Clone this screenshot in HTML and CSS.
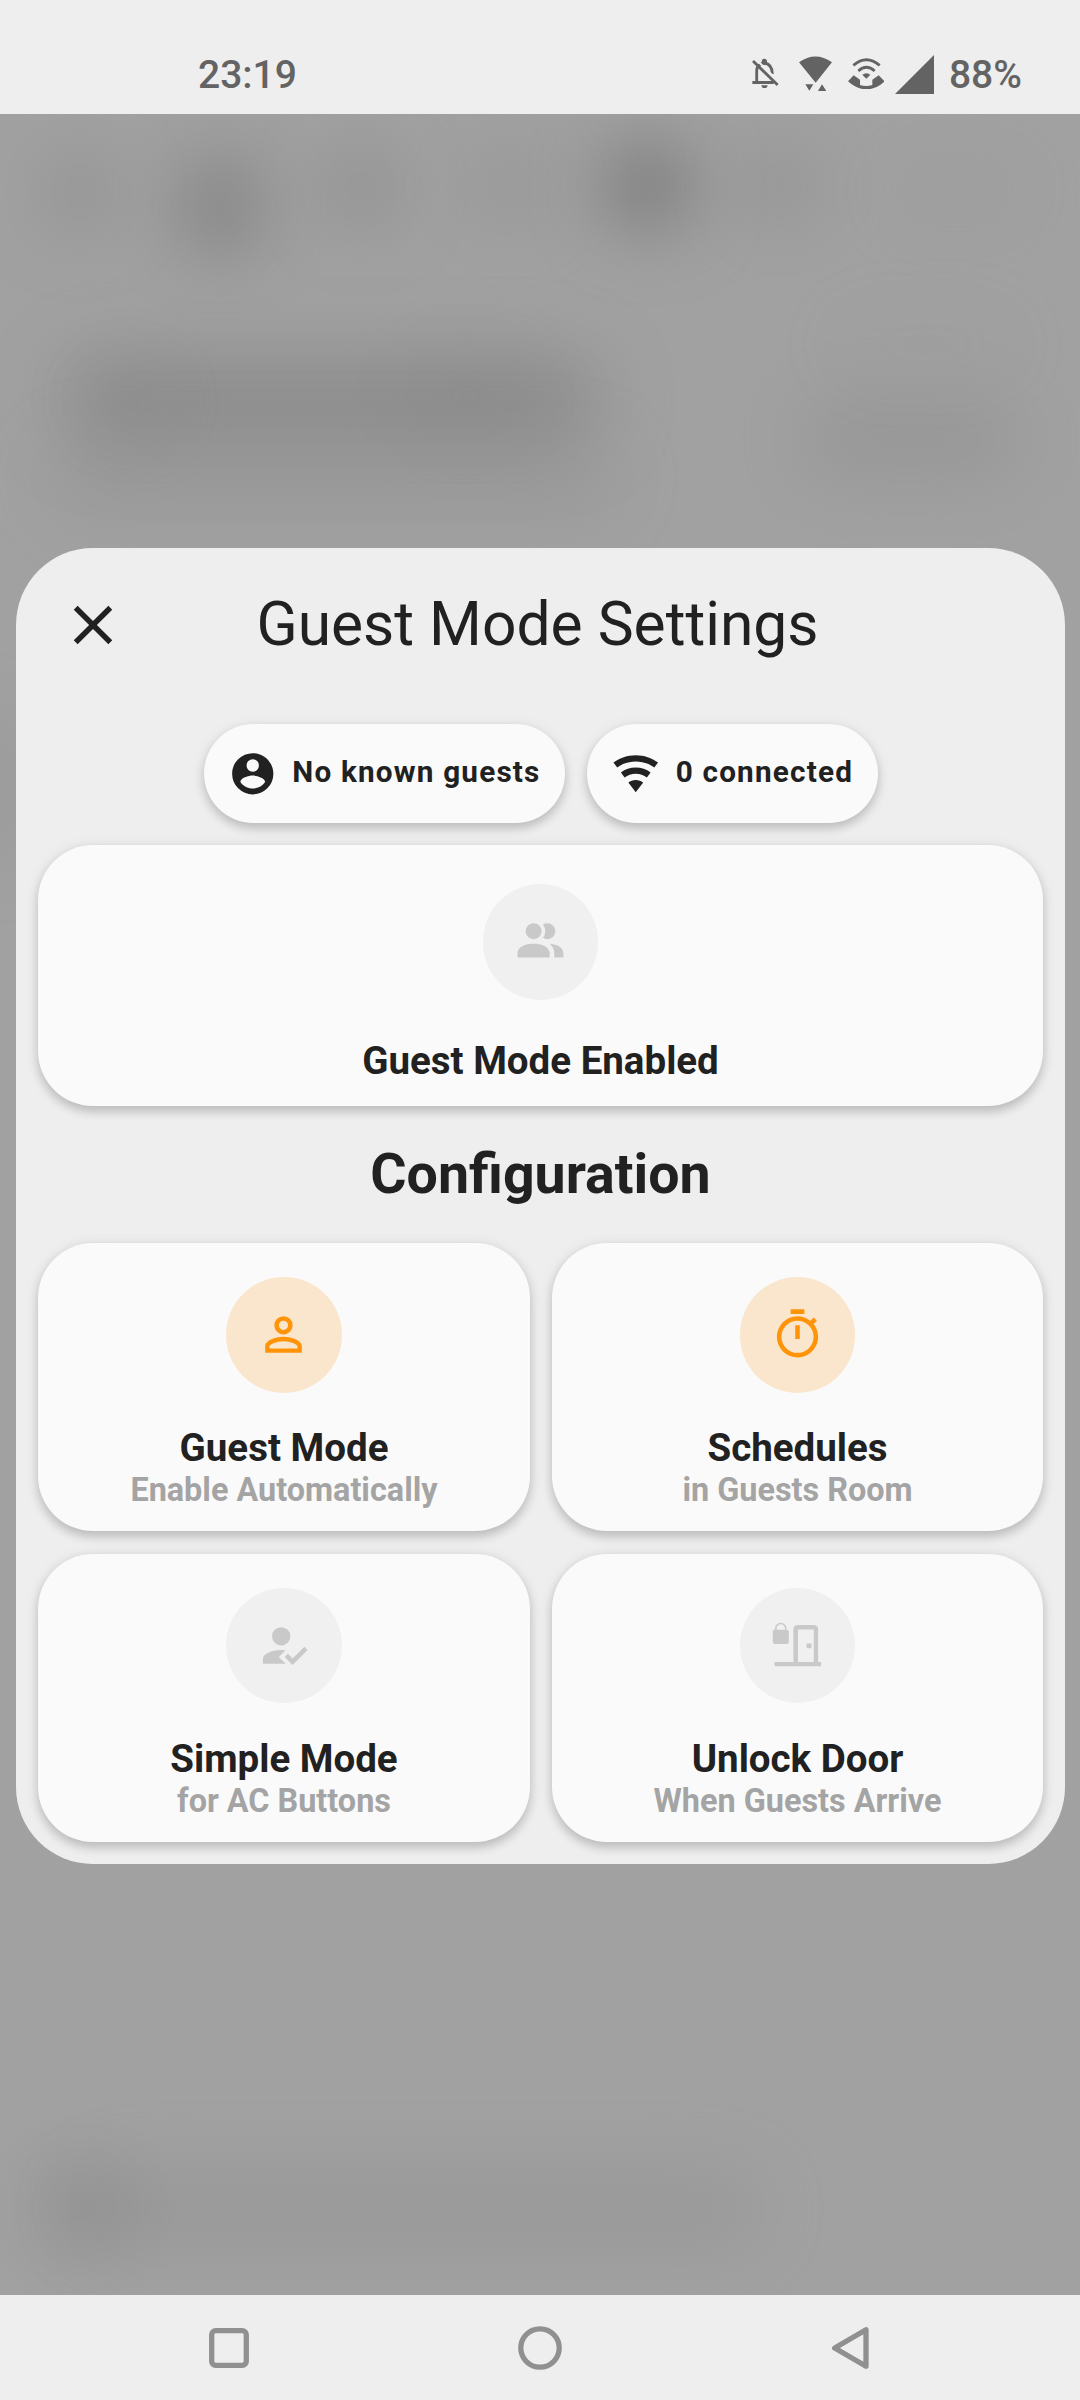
FILE: index.html
```html
<!DOCTYPE html>
<html lang="en">
<head>
<meta charset="utf-8">
<title>Guest Mode Settings</title>
<link rel="stylesheet" href="styles.css">
</head>
<body>
<div class="screen">
  <header class="statusbar">
    <span class="clock">23:19</span>
    <div class="status-icons">
      <svg class="i-bell" viewBox="97 84 80 91"><path d="M111 160V124q0-21 23-25q24 4 24 33M98 157.500H162" fill="none" stroke="#636363" stroke-width="8.500"/><path d="M126 104V94q0-8 8-8t8 8V104zM125 166h19q-1 9-9.500 9t-9.500-9z" fill="#636363"/><path d="M107 86L182 159" stroke="#eee" stroke-width="6"/><path d="M100 93L174 165" stroke="#636363" stroke-width="8.500"/></svg>
      <svg class="i-wifi" viewBox="238 77 99 106"><path d="M238 96Q287 61 337 96L288 157zM257 162H281L269 181zM295 182L307 162L320 182z" fill="#636363"/></svg>
      <svg class="i-call" viewBox="383 83 110 95"><g fill="none" stroke="#636363" stroke-width="8.500"><path d="M399 105Q438 71 478 105M414 122Q438 100 463 122"/></g><path d="M426 133Q438 124 450 133L438 145z" fill="#636363"/><path d="M383 153L400 135L419 148V164Q437 170 456 164V148L475 135L493 153Q467 177 438 177T383 153z" fill="#636363"/></svg>
      <svg class="i-signal" viewBox="0 0 39 39"><path d="M39 0V39H0z" fill="#636363"/></svg>
      <span class="battery">88%</span>
    </div>
  </header>

  <main class="backdrop">
    <div class="blobs" aria-hidden="true">
      <i class="b1"></i><i class="b2"></i><i class="b3"></i><i class="b4"></i><i class="b5"></i><i class="b6"></i><i class="b7"></i>
      <i class="b8"></i><i class="b9"></i><i class="b10"></i><i class="b11"></i><i class="b12"></i><i class="b13"></i><i class="b14"></i><i class="b15"></i><i class="b16"></i>
    </div>
    <section class="dialog">
      <div class="dialog-head">
        <svg class="close" viewBox="0 0 24 24"><path d="M19,6.41L17.59,5L12,10.59L6.41,5L5,6.41L10.59,12L5,17.59L6.41,19L12,13.41L17.59,19L19,17.59L13.41,12L19,6.41Z"/></svg>
        <h1>Guest Mode Settings</h1>
      </div>
      <div class="chips">
        <div class="chip">
          <svg viewBox="0 0 24 24"><path d="M12,19.2C9.5,19.2 7.29,17.92 6,16C6.03,14 10,12.9 12,12.9C14,12.9 17.97,14 18,16C16.71,17.92 14.5,19.2 12,19.2M12,5A3,3 0 0,1 15,8A3,3 0 0,1 12,11A3,3 0 0,1 9,8A3,3 0 0,1 12,5M12,2A10,10 0 0,0 2,12A10,10 0 0,0 12,22A10,10 0 0,0 22,12C22,6.47 17.5,2 12,2Z"/></svg>
          <span>No known guests</span>
        </div>
        <div class="chip">
          <svg viewBox="0 0 24 24"><path d="M12,21L15.6,16.2C14.6,15.45 13.35,15 12,15C10.65,15 9.4,15.45 8.4,16.2L12,21M12,3C7.95,3 4.21,4.34 1.2,6.6L3,9C5.5,7.12 8.62,6 12,6C15.38,6 18.5,7.12 21,9L22.8,6.6C19.79,4.34 16.05,3 12,3M12,9C9.3,9 6.81,9.89 4.8,11.4L6.6,13.8C8.1,12.67 9.97,12 12,12C14.03,12 15.9,12.67 17.4,13.8L19.2,11.4C17.19,9.89 14.7,9 12,9Z"/></svg>
          <span>0 connected</span>
        </div>
      </div>
      <div class="card card-wide">
        <div class="badge"><svg viewBox="0 0 24 24"><path d="M16 17V19H2V17S2 13 9 13 16 17 16 17M12.500 7.500A3.500 3.500 0 1 0 9 11A3.500 3.500 0 0 0 12.500 7.500M15.940 13A5.320 5.320 0 0 1 18 17V19H22V17S22 13.370 15.940 13M15 4A3.390 3.390 0 0 0 13.070 4.590A5 5 0 0 1 13.070 10.410A3.390 3.390 0 0 0 15 11A3.500 3.500 0 0 0 15 4Z"/></svg></div>
        <div class="name">Guest Mode Enabled</div>
      </div>
      <h2>Configuration</h2>
      <div class="grid">
        <div class="card">
          <div class="badge on"><svg viewBox="0 0 24 24"><path d="M12,4A4,4 0 0,1 16,8A4,4 0 0,1 12,12A4,4 0 0,1 8,8A4,4 0 0,1 12,4M12,6A2,2 0 0,0 10,8A2,2 0 0,0 12,10A2,2 0 0,0 14,8A2,2 0 0,0 12,6M12,13C14.67,13 20,14.33 20,17V20H4V17C4,14.33 9.33,13 12,13M12,14.9C9.03,14.9 5.9,16.36 5.9,17V18.1H18.1V17C18.1,16.36 14.97,14.9 12,14.9Z"/></svg></div>
          <div class="name">Guest Mode</div>
          <div class="sub">Enable Automatically</div>
        </div>
        <div class="card">
          <div class="badge on"><svg viewBox="0 0 24 24"><path d="M12,20A7,7 0 0,1 5,13A7,7 0 0,1 12,6A7,7 0 0,1 19,13A7,7 0 0,1 12,20M19.03,7.39L20.45,5.97C20,5.46 19.55,5 19.04,4.56L17.62,6C16.07,4.74 14.12,4 12,4A9,9 0 0,0 3,13A9,9 0 0,0 12,22C17,22 21,17.97 21,13C21,10.88 20.26,8.93 19.03,7.39M11,14H13V8H11M15,1H9V3H15V1Z"/></svg></div>
          <div class="name">Schedules</div>
          <div class="sub">in Guests Room</div>
        </div>
        <div class="card">
          <div class="badge"><svg viewBox="0 0 24 24"><path d="M21.1,12.5L22.5,13.91L15.97,20.5L12.5,17L13.9,15.59L15.97,17.67L21.1,12.5M10,17L13,20H3V18C3,15.79 6.58,14 11,14L12.89,14.11L10,17M11,4A4,4 0 0,1 15,8A4,4 0 0,1 11,12A4,4 0 0,1 7,8A4,4 0 0,1 11,4Z"/></svg></div>
          <div class="name">Simple Mode</div>
          <div class="sub">for AC Buttons</div>
        </div>
        <div class="card">
          <div class="badge"><svg viewBox="0 0 24 24"><path d="M2 19.200H10.200V5Q10.200 3 12.200 3H19Q21 3 21 5V19.200H22.300V21.100H2zM12.200 5V19.200H19.100V5zM16 11.100H18.100V13.200H16zM2 5.100H7.400Q8.200 5.100 8.200 5.900V10.500Q8.200 11.300 7.400 11.300H2Q1.200 11.300 1.200 10.500V5.900Q1.200 5.100 2 5.100z" fill-rule="evenodd"/><path d="M2.500 5.500V4.700A2.200 2.300 0 0 1 6.900 4.700V5.500" class="shackle"/></svg></div>
          <div class="name">Unlock Door</div>
          <div class="sub">When Guests Arrive</div>
        </div>
      </div>
    </section>
  </main>

  <nav class="navbar">
    <svg viewBox="0 0 44 44"><rect x="4.700" y="4.700" width="34.600" height="34.600" rx="4"/></svg>
    <svg viewBox="0 0 44 44"><circle cx="22" cy="22" r="19.200"/></svg>
    <svg viewBox="0 0 44 44"><path d="M37 3.800V40.200L5.700 22z"/></svg>
  </nav>
</div>
</body>
</html>
```
FILE: styles.css
```css
* { box-sizing: border-box; }
body { margin: 0; font-family: Roboto, "Liberation Sans", sans-serif; color: #212121; background: #eee; }
.screen { width: 1080px; height: 2400px; display: flex; flex-direction: column; }
svg { display: block; flex: none; }

.statusbar {
  height: 114px; flex: none; display: flex; justify-content: space-between; align-items: flex-start;
  padding: 51px 58px 0 198px; font-size: 39px; line-height: 49px; font-weight: 500; color: #636363;
}
.status-icons { display: flex; align-items: flex-start; }
.i-bell { width: 26.700px; height: 30.300px; margin-top: 7px; margin-right: 20.300px; }
.i-wifi { width: 33px; height: 35.300px; margin-top: 4.700px; margin-right: 15.300px; }
.i-call { width: 36.700px; height: 31.700px; margin-top: 6.700px; margin-right: 10.600px; }
.i-signal { width: 39px; height: 39px; margin-top: 3.500px; margin-right: 15px; }

.backdrop { flex: 1; position: relative; overflow: hidden; background: #a1a1a1; padding: 434px 15px 0 16px; }
.blobs { position: absolute; inset: 0; }
.blobs i { position: absolute; border-radius: 40px; filter: blur(36px); background: #808080; }
.blobs .b1 { left: 45px; top: 40px; width: 70px; height: 76px; opacity: .5; }
.blobs .b2 { left: 182px; top: 40px; width: 78px; height: 104px; opacity: .92; }
.blobs .b3 { left: 325px; top: 36px; width: 72px; height: 74px; opacity: .6; }
.blobs .b4 { left: 470px; top: 36px; width: 80px; height: 70px; opacity: .35; }
.blobs .b5 { left: 607px; top: 32px; width: 80px; height: 80px; opacity: 1; background: #727272; }
.blobs .b6 { left: 740px; top: 36px; width: 78px; height: 70px; opacity: .45; }
.blobs .b7 { left: 880px; top: 46px; width: 150px; height: 60px; opacity: .1; }
.blobs .b8 { left: 62px; top: 242px; width: 540px; height: 86px; opacity: .62; }
.blobs .b9 { left: 50px; top: 330px; width: 565px; height: 66px; opacity: .26; }
.blobs .b10 { left: 800px; top: 290px; width: 220px; height: 70px; opacity: .34; }
.blobs .b11 { left: 400px; top: 250px; width: 130px; height: 66px; opacity: .24; }
.blobs .b12 { left: 830px; top: 200px; width: 190px; height: 60px; opacity: .07; }
.blobs .b13 { left: 44px; top: 2056px; width: 74px; height: 74px; opacity: .66; }
.blobs .b14 { left: 80px; top: 2060px; width: 680px; height: 70px; opacity: .28; }
.blobs .b15 { left: -30px; top: 600px; width: 50px; height: 150px; opacity: .25; }
.blobs .b16 { left: 90px; top: 260px; width: 80px; height: 54px; opacity: .22; }

.dialog { position: relative; height: 1316px; background: #eee; border-radius: 77px; padding: 0 22px 22px; overflow: hidden; }
.dialog-head { height: 154px; display: flex; align-items: center; padding: 0 94px 0 22px; }
.close { width: 66px; height: 66px; fill: #212121; }
h1 { margin: 0; flex: 1; text-align: center; font-size: 60.500px; font-weight: 400; line-height: 72px; white-space: nowrap; }
.chips { display: flex; justify-content: center; gap: 22px; margin: 22px 0; }
.chip {
  height: 99px; display: flex; align-items: center; gap: 14.850px; padding: 0 24.400px; border-radius: 49.500px;
  background: #fafafa; font-size: 29.700px; font-weight: 700; letter-spacing: 1.200px; white-space: nowrap;
  box-shadow: 0 5.500px 10px rgba(0,0,0,.14), 0 2.750px 13.750px rgba(0,0,0,.1);
}
.chip svg { width: 49.500px; height: 49.500px; fill: #212121; }
.chip span { line-height: 36px; margin-top: -3px; }
.card {
  height: 288px; padding-top: 34px; border-radius: 55px; background: #fafafa; text-align: center;
  display: flex; flex-direction: column; align-items: center;
  box-shadow: 0 5.500px 10px rgba(0,0,0,.14), 0 2.750px 13.750px rgba(0,0,0,.1);
}
.card-wide { height: 261px; padding-top: 39px; }
.badge {
  width: 115.500px; height: 115.500px; flex: none; border-radius: 50%; display: flex; align-items: center; justify-content: center;
  margin-bottom: 27.500px; background: #f0f0f0; fill: #c9c9c9;
}
.card-wide .badge { margin-bottom: 33px; }
.grid .badge { padding-right: 1px; }
.badge.on { background: #fae6cc; fill: #ff9409; }
.badge svg { width: 55px; height: 55px; }
.shackle { fill: none; stroke: #c9c9c9; stroke-width: .7; }
.name { font-size: 38.500px; line-height: 55px; font-weight: 700; }
.sub { font-size: 32.400px; line-height: 30px; font-weight: 700; color: #a4a4a4; }
h2 { margin: 0; height: 137px; line-height: 137px; font-size: 55.500px; font-weight: 700; text-align: center; }
.grid { display: grid; grid-template-columns: 492px 491px; gap: 22.500px 22px; }

.navbar { height: 105px; flex: none; display: flex; justify-content: space-between; align-items: center; padding: 0 207px; }
.navbar svg { width: 44px; height: 44px; fill: none; stroke: #909090; stroke-width: 5.300; stroke-linejoin: round; }
```
